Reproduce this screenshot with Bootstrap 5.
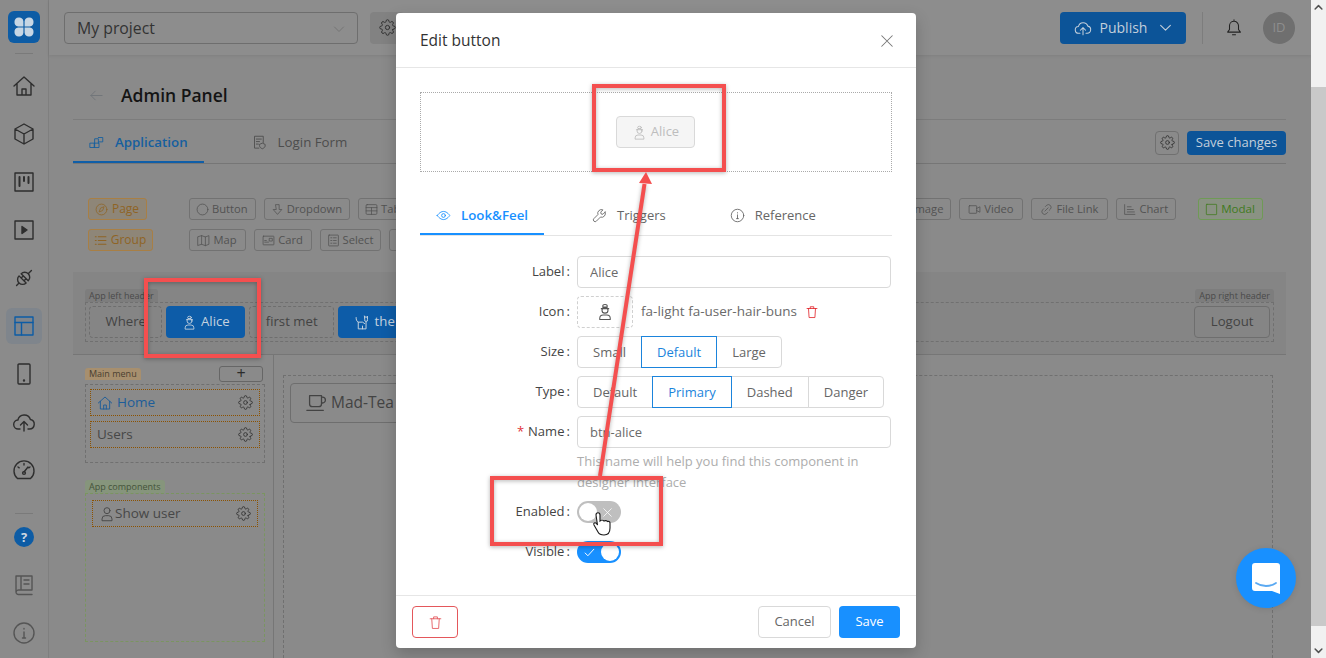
<!DOCTYPE html>
<html lang="en">
<head>
    <meta charset="UTF-8">
    <title>Admin Panel - Edit button</title>
    <link href="https://cdn.jsdelivr.net/npm/bootstrap@5.3.0/dist/css/bootstrap.min.css" rel="stylesheet">
    <style>
        body {
            font-family: "Open Sans", "Liberation Sans", sans-serif;
            font-size: 13px;
            background-color: #8a8a8a;
            color: #3a3a3a;
            width: 1326px;
            height: 658px;
            overflow: hidden;
            position: relative;
        }
        .ico { width: 1em; height: 1em; fill: none; stroke: currentColor; stroke-width: 1.4; stroke-linecap: round; stroke-linejoin: round; flex-shrink: 0; }

        /* left rail */
        .rail { width: 49px; border-right: 1px solid #7f7f7f; background-color: #8b8b8b; }
        .rail-logo { width: 32px; height: 32px; margin-top: 11px; background-color: #0d5ca5; border-radius: 6px; }
        .rail-sep { width: 18px; height: 1px; background-color: #7a7a7a; }
        .rail-sep-top { margin: 10px 0 8px; }
        .rail-sep-bottom { margin: 19px 0 -1px; }
        .rail-item { height: 48px; width: 100%; font-size: 24px; color: #2e2e2e; }
        .rail-item.is-on > span { width: 36px; height: 36px; border-radius: 6px; background-color: #7f858c; color: #0d5ca5; }
        .rail-item.is-soft { color: #555; }
        .rail-help { width: 20px; height: 20px; border-radius: 50%; background-color: #0d5ca5; color: #cfd8e2; font-size: 13px; font-weight: 700; line-height: 20px; text-align: center; }

        /* top bar */
        .topbar { height: 55px; padding: 0 16px 0 15px; background-color: #8d8d8d; box-shadow: 0 1px 3px rgba(0, 0, 0, .08); }
        .project-select { width: 294px; height: 32px; border: 1px solid #6e6e6e; border-radius: 4px; padding: 2px 12px 0; font-size: 15.8px; color: #333; }
        .top-gear { width: 34px; height: 32px; margin-left: 12px; background-color: #828282; border-radius: 4px; font-size: 17px; color: #333; }
        .btn-dim-primary { background-color: #0c5498; color: #c3cfdb; border: 0; border-radius: 4px; }
        .btn-dim-primary:hover { background-color: #0c5498; color: #c3cfdb; }
        .publish-btn { width: 126px; height: 32px; font-size: 14px; padding: 0; }
        .top-sep { width: 1px; height: 32px; background-color: #7d7d7d; margin: 0 16px; }
        .top-bell { font-size: 18px; color: #222; width: 30px; }
        .top-avatar { width: 32px; height: 32px; border-radius: 50%; background-color: #6f6f6f; color: #8e8e8e; font-size: 13px; margin-left: 14px; }

        /* page */
        .page-body { padding: 0 25px 0 24px; overflow: hidden; }
        .page-head { height: 65px; padding-top: 16px; border-bottom: 1px solid #7c7c7c; }
        .page-back { color: #6f7378; font-size: 15px; width: 48px; padding-left: 16px; }
        .page-title { font-size: 17.5px; font-weight: 600; color: #141414; margin: 0; }
        .tabs-line { height: 44px; border-bottom: 1px solid #767676; }
        .tab-row { gap: 32px; }
        .tab-item { height: 100%; padding: 4px 16px 0; gap: 11px; color: #4d4d4d; font-size: 13.3px; text-decoration: none; margin-bottom: -1px; border-bottom: 2px solid transparent; }
        .tab-item.is-on { color: #155f9f; font-weight: 600; border-bottom-color: #0f5ea8; }
        .tab-item .ico { font-size: 15px; }
        .tabs-tools { margin-top: 2px; }
        .gear-small { width: 24px; height: 24px; border: 1px solid #707070; border-radius: 4px; font-size: 15px; color: #333; margin-right: 8px; }
        .save-changes { width: 99px; height: 24px; font-size: 13px; padding: 0; }

        .palette { padding: 34px 0 0 15px; height: 108px; }
        .palette-side { width: 101px; }
        .palette-row { gap: 8px; height: 22px; margin-bottom: 9px; }
        .chip { height: 22px; padding: 0 7px 0 6px; border: 1px solid #727272; border-radius: 3px; font-size: 11.2px; color: #525252; gap: 3px; white-space: nowrap; justify-content: center; }
        .chip .ico { font-size: 13px; }
        .chip-orange { color: #8f6425; border-color: #a87f45; background-color: #8e8678; font-size: 12px; gap: 4px; }
        .chip-green { color: #3f7a1d; border-color: #6f9a56; background-color: #8a9283; font-weight: 500; margin-left: 14px; font-size: 11.6px; }
        .w-page { width: 59px; }
        .w-group { width: 65px; }
        .w-map { width: 57px; }
        .w-card { width: 58px; }
        .w-select { width: 61px; }
        .w-video { width: 64px; }
        .w-link { width: 77px; }

        .app-head { height: 83px; padding: 18px 12px 0; background-color: #858585; border-bottom: 1px solid #767676; }
        .zone-tag { height: 13px; line-height: 13px; padding: 0 4px; font-size: 9px; color: #4a4a4a; background-color: #7d7d7d; border-radius: 3px 3px 0 0; }
        .zone-box { height: 40px; padding: 3px 3px 3px 3px; border: 1px dashed #707070; gap: 4px; }
        .dim-btn { height: 32px; border-radius: 4px; font-size: 13.2px; color: #434343; gap: 4px; white-space: nowrap; }
        .dim-dashed { border: 1px dashed #6e6e6e; padding: 0 15.5px; }
        .dim-solid { border: 1px solid #6e6e6e; padding: 0 15.5px; }
        .dim-fill { background-color: #0d5ca8; color: #c5d2df; padding: 0 15.5px; }

        .menu-side { width: 201px; padding: 11px 8px 0 12px; border-right: 1px solid #767676; }
        .zone-tag-menu { background-color: #a78f6e; color: #4a4030; height: 12px; line-height: 12px; }
        .zone-tag-app { display: block; width: fit-content; background-color: #86957c; color: #44533a; height: 13px; line-height: 13px; margin-top: 17px; }
        .plus-btn { width: 44px; height: 16px; border: 1px solid #666; border-radius: 3px; font-size: 16px; line-height: 12px; color: #2b2b2b; text-align: center; margin-bottom: 2px; }
        .menu-box { height: 79px; width: 180px; border: 1px dashed #707070; padding: 4px; gap: 5px; }
        .apps-box { height: 149px; width: 180px; border: 1px dashed #7a9560; padding: 6px; }
        .menu-entry { height: 27px; border: 1px dashed #8c5200; border-style: dotted; padding: 0 6px; font-size: 13.5px; color: #474747; gap: 4px; }
        .menu-entry.is-on { color: #1c5d99; }
        .menu-entry.entry-tight { gap: 0; }
        .menu-entry .ico { font-size: 16px; }
        .menu-entry .ico-gear { color: #333; margin-left: auto; font-size: 15px; }
        .canvas-side { padding: 20px 13px 0 9px; }
        .canvas-box { height: 283px; border: 1px dashed #707070; border-bottom: 0; padding: 7px 6px; }
        .mad-btn { height: 40px; padding: 0 16px 0 14px; font-size: 15.5px; border: 1px solid #6e6e6e; border-radius: 4px; color: #434343; gap: 4px; width: max-content; }
        .mad-btn .ico { font-size: 22px; }

        /* fake scrollbar */
        .scroll-rail { width: 15px; background-color: #f1f1f1; color: #505050; }
        .scroll-thumb { background-color: #c9c9c9; margin-top: 72px; margin-bottom: 17px; }
        .scroll-arrow { height: 15px; font-size: 9px; }
        .scroll-arrow .ico { stroke-width: 4; }

        /* modal */
        .edit-modal { position: absolute; left: 396px; top: 13px; width: 520px; height: 635px; background-color: #fff; border: 0; border-radius: 4px; box-shadow: 0 6px 16px rgba(0, 0, 0, .2); z-index: 5; color: #555; }
        .edit-modal .modal-header { height: 55px; flex-shrink: 0; padding: 1px 24px 0; border-bottom: 1px solid #e6e6e6; }
        .edit-modal .modal-title { font-size: 15.5px; font-weight: 500; color: #333; margin: 0; }
        .modal-x { font-size: 18px; color: #777; margin-right: -4px; }
        .edit-modal .modal-body { padding: 24px; flex: 1; min-height: 0; overflow: hidden; }
        .preview-box { height: 80px; border: 1px dotted #aaa; }
        .btn-preview { width: 79px; height: 32px; margin-right: 1px; background-color: #f5f5f5; border: 1px solid #d9d9d9; border-radius: 4px; color: #bdbdbd; font-size: 13px; gap: 4px; }
        .btn-preview .ico { font-size: 15px; }
        .modal-tabs { height: 40px; margin-top: 24px; border-bottom: 1px solid #e4e4e4; }
        .modal-tabs .tab-item { padding-top: 2px; color: #666; font-size: 13px; gap: 10px; }
        .modal-tabs .tab-item.is-on { color: #1890ff; font-size: 13.3px; font-weight: 600; border-bottom-color: #1890ff; }
        .form-rows { padding-top: 20px; }
        .form-line { display: flex; align-items: center; height: 32px; margin-bottom: 8px; }
        .form-line.line-icon { height: 33px; margin-top: -1px; }
        .form-cap { width: 150px; text-align: right; color: #444; margin-right: 7px; font-size: 13px; white-space: nowrap; }
        .form-cap .req { color: #e2333a; margin-right: 4px; }
        .field { width: 314px; height: 32px; font-size: 13px; padding: 0 12px; color: #6a6a6a; border: 1px solid #d9d9d9; border-radius: 4px; box-shadow: none; }
        .icon-pick { width: 56px; height: 32px; border: 1px dashed #d0d0d0; border-radius: 4px; font-size: 18px; color: #555; }
        .icon-name { margin-left: 8px; color: #6a6a6a; font-size: 13.5px; }
        .icon-del { margin-left: 8px; color: #e2232a; font-size: 14px; }
        .seg .btn { height: 32px; padding: 0 15px; font-size: 13px; color: #666; border-color: #d9d9d9; background: #fff; border-radius: 4px; line-height: 30px; }
        .seg .btn.is-on { color: #1b84dc; border-color: #1b84dc; z-index: 1; }
        .form-note { margin: -5px 0 9px 157px; width: 310px; line-height: 21px; color: #adadad; font-size: 13px; }
        .form-line.line-toggle { height: 20px; margin-bottom: 20px; }
        .toggle-pill { width: 44px; height: 22px; border-radius: 11px; background-color: #bfbfbf; position: relative; color: #fff; font-size: 13px; }
        .toggle-pill::after { content: ""; position: absolute; top: 2px; left: 2px; width: 18px; height: 18px; border-radius: 50%; background-color: #fff; }
        .toggle-pill .ico { position: absolute; top: 5px; right: 7px; }
        .toggle-pill.is-on { background-color: #1890ff; }
        .toggle-pill.is-on::after { left: 24px; }
        .toggle-pill.is-on .ico { right: auto; left: 6px; stroke-width: 1.800; }
        .edit-modal .modal-footer { height: 53px; flex-shrink: 0; padding: 0 16px; border-top: 1px solid #e6e6e6; }
        .edit-modal .modal-footer > * { margin: 0; }
        .foot-del { width: 46px; height: 32px; padding: 0; border: 1px solid #e4575b; border-radius: 4px; color: #e4575b; background: #fff; font-size: 15px; }
        .foot-cancel { width: 73px; height: 32px; padding: 0; border: 1px solid #d9d9d9; border-radius: 4px; color: #666; background: #fff; font-size: 13px; margin-right: 8px !important; }
        .foot-save { width: 61px; height: 32px; padding: 0; border: 0; border-radius: 4px; color: #fff; background: #1890ff; font-size: 13px; font-weight: 500; }

        .chat-bubble { position: absolute; left: 1236px; top: 548px; width: 60px; height: 60px; border-radius: 50%; background-color: #1890ff; box-shadow: 0 1px 6px rgba(0, 0, 0, .1); z-index: 6; }
        .markup { position: absolute; left: 0; top: 0; z-index: 8; pointer-events: none; }
    </style>
</head>
<body>
    <!-- icon set -->
    <svg class="d-none" xmlns="http://www.w3.org/2000/svg">
        <symbol id="i-gear" viewBox="0 0 24 24"><circle cx="12" cy="12" r="3"/><path d="M19.4 15a1.65 1.65 0 0 0 .33 1.82l.06.06a2 2 0 0 1 0 2.83 2 2 0 0 1-2.83 0l-.06-.06a1.65 1.65 0 0 0-1.82-.33 1.65 1.65 0 0 0-1 1.51V21a2 2 0 0 1-2 2 2 2 0 0 1-2-2v-.09A1.65 1.65 0 0 0 9 19.4a1.65 1.65 0 0 0-1.82.33l-.06.06a2 2 0 0 1-2.83 0 2 2 0 0 1 0-2.83l.06-.06a1.65 1.65 0 0 0 .33-1.82 1.65 1.65 0 0 0-1.51-1H3a2 2 0 0 1-2-2 2 2 0 0 1 2-2h.09A1.65 1.65 0 0 0 4.6 9a1.65 1.65 0 0 0-.33-1.82l-.06-.06a2 2 0 0 1 0-2.83 2 2 0 0 1 2.83 0l.06.06a1.65 1.65 0 0 0 1.82.33H9a1.65 1.65 0 0 0 1-1.51V3a2 2 0 0 1 2-2 2 2 0 0 1 2 2v.09a1.65 1.65 0 0 0 1 1.51 1.65 1.65 0 0 0 1.82-.33l.06-.06a2 2 0 0 1 2.83 0 2 2 0 0 1 0 2.83l-.06.06a1.65 1.65 0 0 0-.33 1.82V9a1.65 1.65 0 0 0 1.51 1H21a2 2 0 0 1 2 2 2 2 0 0 1-2 2h-.09a1.65 1.65 0 0 0-1.51 1z"/></symbol>
        <symbol id="i-home" viewBox="0 0 24 24"><path d="M2 12 12 3l10 9M5 9.5V21h14V9.5M10 21v-6h4v6"/></symbol>
        <symbol id="i-cube" viewBox="0 0 24 24"><path d="M12 2 3 7v10l9 5 9-5V7zM3 7l9 5 9-5M12 12v10"/></symbol>
        <symbol id="i-kanban" viewBox="0 0 24 24"><rect x="3" y="3" width="18" height="18"/><path d="M7.5 7v9M12 7v4M16.5 7v6" stroke-width="2"/></symbol>
        <symbol id="i-play" viewBox="0 0 24 24"><rect x="3" y="3" width="18" height="18"/><path d="M10 8.5v7l5-3.5z" fill="currentColor"/></symbol>
        <symbol id="i-plug" viewBox="0 0 24 24"><g transform="rotate(45 12 12)"><path d="M7 11a5 5 0 0 1 10 0zM12 6V1.500M7 14h10a5 5 0 0 1-10 0zM12 19v3.500M10 11v3M14 11v3"/></g></symbol>
        <symbol id="i-layout" viewBox="0 0 24 24"><rect x="3" y="3" width="18" height="18"/><path d="M3 8.5h18M9.5 8.5V21"/></symbol>
        <symbol id="i-phone" viewBox="0 0 24 24"><rect x="6" y="2" width="12" height="20" rx="1"/><circle cx="12" cy="18.5" r=".5" fill="currentColor"/></symbol>
        <symbol id="i-cloud" viewBox="0 0 24 24"><path d="M8 19H6.5a4.5 4.5 0 0 1-.6-9A6.5 6.5 0 0 1 18.400 9.500 4.800 4.800 0 0 1 17.500 19H16M12 21v-9M8.500 15 12 11.500 15.500 15"/></symbol>
        <symbol id="i-gauge" viewBox="0 0 24 24"><path d="M5.500 20.500a10 10 0 1 1 13 0zM12 14l4-5M12 5.500v1.500M6 9l1.200.8M18 9l-1.200.8"/><circle cx="12" cy="15" r="1.400"/></symbol>
        <symbol id="i-book" viewBox="0 0 24 24"><path d="M4 19V3h16v14H6.500A2.500 2.500 0 0 0 4 19a2.500 2.500 0 0 0 2.500 2.500H20M9 3v14M12 7h5M12 11h5"/></symbol>
        <symbol id="i-info" viewBox="0 0 24 24"><circle cx="12" cy="12" r="10"/><path d="M12 11v6M10.500 17h3M12 7.500v.5" /></symbol>
        <symbol id="i-buns" viewBox="0 0 24 24"><path d="M5 22v-1.500a4.500 4.500 0 0 1 4.500-4.500h5a4.500 4.500 0 0 1 4.500 4.500V22zM7 7.500h10"/><circle cx="12" cy="9.500" r="4"/><ellipse cx="12" cy="4" rx="3" ry="2"/></symbol>
        <symbol id="i-user" viewBox="0 0 24 24"><circle cx="12" cy="7" r="4.500"/><path d="M4.500 21.500v-2a5 5 0 0 1 5-5h5a5 5 0 0 1 5 5v2z"/></symbol>
        <symbol id="i-mug" viewBox="0 0 24 24"><path d="M5 4h13v9a3 3 0 0 1-3 3H8a3 3 0 0 1-3-3zM18 5.500h1a3 3 0 0 1 0 6.500h-1M2 20h18"/></symbol>
        <symbol id="i-cat" viewBox="0 0 24 24"><path d="M3 5c0 3 .5 5 3 6.500V21h11V11M6 11.500h6l3 2M12 21v-4M15 3l1 1.500h2L19 3v5a2 2 0 0 1-2 2.500A2 2 0 0 1 15 8z"/></symbol>
        <symbol id="i-eye" viewBox="0 0 24 24"><path d="M2 12s4-6.500 10-6.500S22 12 22 12s-4 6.500-10 6.500S2 12 2 12z"/><circle cx="12" cy="12" r="3"/></symbol>
        <symbol id="i-wrench" viewBox="0 0 24 24"><path d="M21 6.500l-3.500 3.500-3-.5-.5-3L17.500 3a6 6 0 0 0-8 7.500L3 17a2.800 2.800 0 0 0 4 4l6.500-6.500A6 6 0 0 0 21 6.500z"/></symbol>
        <symbol id="i-trash" viewBox="0 0 24 24"><path d="M3.500 6h17M6 6l1 15.500h10L18 6M9 6V3h6v3"/></symbol>
        <symbol id="i-x" viewBox="0 0 24 24"><path d="M5 5l14 14M19 5 5 19"/></symbol>
        <symbol id="i-check" viewBox="0 0 24 24"><path d="M4 13l5 5L20 6"/></symbol>
        <symbol id="i-down" viewBox="0 0 24 24"><path d="M3 8l9 9 9-9"/></symbol>
        <symbol id="i-up" viewBox="0 0 24 24"><path d="M3 16l9-9 9 9"/></symbol>
        <symbol id="i-bell" viewBox="0 0 24 24"><path d="M12 3a6 6 0 0 0-6 6v5l-2.500 3.500h17L18 14V9a6 6 0 0 0-6-6zM12 1v2M10 21h4"/></symbol>
        <symbol id="i-left" viewBox="0 0 24 24"><path d="M21 12H3M10 5l-7 7 7 7"/></symbol>
        <symbol id="i-blocks" viewBox="0 0 24 24"><path d="M2 13h7v7H2zM9 13h7v7H9zM9 13V6h6v7M15 4h7v7h-6"/></symbol>
        <symbol id="i-form" viewBox="0 0 24 24"><path d="M11 21H4V2h14v10M7 6.500h8M7 10.500h5M7 14.500h3M12 15l4.500-2 4.500 2v2.500c0 2-2 3.500-4.500 4.500-2.500-1-4.500-2.500-4.500-4.500z"/></symbol>
        <symbol id="i-compass" viewBox="0 0 24 24"><circle cx="12" cy="12" r="10"/><path d="M16.500 7.500 14 14l-6.500 2.500L10 10z"/></symbol>
        <symbol id="i-list" viewBox="0 0 24 24"><path d="M8 5h14M8 12h14M8 19h14M2.500 5h1.500M2.500 12h1.500M2.500 19h1.500" stroke-width="2"/></symbol>
        <symbol id="i-circle" viewBox="0 0 24 24"><circle cx="12" cy="12" r="10"/></symbol>
        <symbol id="i-arrow-down" viewBox="0 0 24 24"><path d="M9 3h6v9h5l-8 9-8-9h5z"/></symbol>
        <symbol id="i-table" viewBox="0 0 24 24"><rect x="2" y="3" width="20" height="18" rx="2"/><path d="M2 8.500h20M2 14.500h20M12 8.500V21"/></symbol>
        <symbol id="i-map" viewBox="0 0 24 24"><path d="M2 5l6.500-2 7 2.500L22 3v16l-6.500 2.500-7-2.500L2 21zM8.500 3v16M15.500 5.500v16"/></symbol>
        <symbol id="i-card" viewBox="0 0 24 24"><rect x="2" y="4" width="20" height="16" rx="1"/><path d="M5 15h7M5 12h3M14 8h5v5h-5z"/></symbol>
        <symbol id="i-select" viewBox="0 0 24 24"><rect x="3" y="2" width="18" height="20" rx="1"/><path d="M7 7h2M12 7h5M7 12h2M12 12h5M7 17h2M12 17h5"/></symbol>
        <symbol id="i-image" viewBox="0 0 24 24"><rect x="2" y="4" width="20" height="16" rx="1"/><path d="M2 17l6-6 5 5 3-3 6 6"/></symbol>
        <symbol id="i-video" viewBox="0 0 24 24"><rect x="2" y="5" width="14" height="14" rx="1"/><path d="M16 10l6-3v10l-6-3"/></symbol>
        <symbol id="i-link" viewBox="0 0 24 24"><path d="M9 15l6-6M10 6.500l2.500-2.500a5 5 0 0 1 7 7L17 13.500M14 17.500 11.500 20a5 5 0 0 1-7-7L7 10.500"/></symbol>
        <symbol id="i-chart" viewBox="0 0 24 24"><path d="M3 3v18h19M8 7h7M8 12h11M8 16.500h13"/></symbol>
        <symbol id="i-square" viewBox="0 0 24 24"><rect x="2.500" y="2.500" width="19" height="19" rx="1"/></symbol>
    </svg>

    <div class="d-flex h-100">
        <!-- left rail -->
        <aside class="rail d-flex flex-column align-items-center">
            <div class="rail-logo d-flex align-items-center justify-content-center">
                <svg width="22" height="22" viewBox="0 0 22 22" fill="#c7d6e4"><path d="M10.400 10.400H5.200a4.500 4.500 0 1 1 5.200-5.200zM11.600 10.400h5.200a4.500 4.500 0 1 0-5.200-5.200zM10.400 11.600H5.200a4.500 4.500 0 1 0 5.200 5.200zM11.600 11.600h5.200a4.500 4.500 0 1 1-5.200 5.200z"/></svg>
            </div>
            <div class="rail-sep rail-sep-top"></div>
            <div class="rail-item d-flex align-items-center justify-content-center"><svg class="ico"><use href="#i-home"/></svg></div>
            <div class="rail-item d-flex align-items-center justify-content-center"><svg class="ico"><use href="#i-cube"/></svg></div>
            <div class="rail-item d-flex align-items-center justify-content-center"><svg class="ico"><use href="#i-kanban"/></svg></div>
            <div class="rail-item d-flex align-items-center justify-content-center"><svg class="ico"><use href="#i-play"/></svg></div>
            <div class="rail-item d-flex align-items-center justify-content-center"><svg class="ico"><use href="#i-plug"/></svg></div>
            <div class="rail-item is-on d-flex align-items-center justify-content-center"><span class="d-flex align-items-center justify-content-center"><svg class="ico"><use href="#i-layout"/></svg></span></div>
            <div class="rail-item d-flex align-items-center justify-content-center"><svg class="ico"><use href="#i-phone"/></svg></div>
            <div class="rail-item d-flex align-items-center justify-content-center"><svg class="ico"><use href="#i-cloud"/></svg></div>
            <div class="rail-item d-flex align-items-center justify-content-center"><svg class="ico"><use href="#i-gauge"/></svg></div>
            <div class="rail-sep rail-sep-bottom"></div>
            <div class="rail-item d-flex align-items-center justify-content-center"><span class="rail-help">?</span></div>
            <div class="rail-item is-soft d-flex align-items-center justify-content-center"><svg class="ico"><use href="#i-book"/></svg></div>
            <div class="rail-item is-soft d-flex align-items-center justify-content-center"><svg class="ico"><use href="#i-info"/></svg></div>
        </aside>

        <main class="flex-grow-1 d-flex flex-column" style="min-width:0">
            <!-- top bar -->
            <header class="topbar d-flex align-items-center flex-shrink-0">
                <div class="project-select d-flex align-items-center justify-content-between">
                    <span>My project</span>
                    <svg class="ico" style="font-size:12px;color:#6a6a6a"><use href="#i-down"/></svg>
                </div>
                <div class="top-gear d-flex align-items-center justify-content-center"><svg class="ico"><use href="#i-gear"/></svg></div>
                <button type="button" class="btn btn-dim-primary publish-btn d-flex align-items-center justify-content-center gap-2 ms-auto">
                    <svg class="ico" style="font-size:18px"><use href="#i-cloud"/></svg>
                    <span>Publish</span>
                    <svg class="ico ms-1" style="font-size:13px;stroke-width:2"><use href="#i-down"/></svg>
                </button>
                <div class="top-sep"></div>
                <div class="top-bell d-flex justify-content-center"><svg class="ico"><use href="#i-bell"/></svg></div>
                <div class="top-avatar d-flex align-items-center justify-content-center">ID</div>
            </header>

            <div class="page-body flex-grow-1">
                <div class="page-head d-flex align-items-center">
                    <div class="page-back d-flex"><svg class="ico"><use href="#i-left"/></svg></div>
                    <h1 class="page-title">Admin Panel</h1>
                </div>

                <div class="tabs-line d-flex justify-content-between">
                    <div class="d-flex tab-row h-100">
                        <a class="tab-item is-on d-flex align-items-center"><svg class="ico"><use href="#i-blocks"/></svg>Application</a>
                        <a class="tab-item d-flex align-items-center"><svg class="ico"><use href="#i-form"/></svg>Login Form</a>
                    </div>
                    <div class="tabs-tools d-flex align-items-center">
                        <div class="gear-small d-flex align-items-center justify-content-center"><svg class="ico"><use href="#i-gear"/></svg></div>
                        <button type="button" class="btn btn-dim-primary save-changes">Save changes</button>
                    </div>
                </div>

                <!-- component palette -->
                <div class="palette d-flex">
                    <div class="palette-side">
                        <div class="palette-row d-flex"><span class="chip chip-orange w-page d-flex align-items-center"><svg class="ico"><use href="#i-compass"/></svg>Page</span></div>
                        <div class="palette-row d-flex"><span class="chip chip-orange w-group d-flex align-items-center"><svg class="ico"><use href="#i-list"/></svg>Group</span></div>
                    </div>
                    <div class="flex-grow-1">
                        <div class="palette-row d-flex">
                            <span class="chip d-flex align-items-center"><svg class="ico"><use href="#i-circle"/></svg>Button</span>
                            <span class="chip d-flex align-items-center"><svg class="ico"><use href="#i-arrow-down"/></svg>Dropdown</span>
                            <span class="chip d-flex align-items-center"><svg class="ico"><use href="#i-table"/></svg>Table</span>
                            <span class="chip d-flex align-items-center ms-auto"><svg class="ico"><use href="#i-image"/></svg>Image</span>
                            <span class="chip w-video d-flex align-items-center"><svg class="ico"><use href="#i-video"/></svg>Video</span>
                            <span class="chip w-link d-flex align-items-center"><svg class="ico"><use href="#i-link"/></svg>File Link</span>
                            <span class="chip d-flex align-items-center"><svg class="ico"><use href="#i-chart"/></svg>Chart</span>
                            <span class="chip chip-green d-flex align-items-center"><svg class="ico"><use href="#i-square"/></svg>Modal</span>
                            <span style="width:15px"></span>
                        </div>
                        <div class="palette-row d-flex">
                            <span class="chip w-map d-flex align-items-center"><svg class="ico"><use href="#i-map"/></svg>Map</span>
                            <span class="chip w-card d-flex align-items-center"><svg class="ico"><use href="#i-card"/></svg>Card</span>
                            <span class="chip w-select d-flex align-items-center"><svg class="ico"><use href="#i-select"/></svg>Select</span>
                            <span class="chip d-flex align-items-center">Input</span>
                        </div>
                    </div>
                </div>

                <!-- app header zone -->
                <div class="app-head">
                    <div class="d-flex justify-content-between align-items-end" style="width:1189px;margin-top:-1px">
                        <span class="zone-tag">App left header</span>
                        <span class="zone-tag">App right header</span>
                    </div>
                    <div class="zone-box d-flex align-items-center" style="width:1189px">
                        <span class="dim-btn dim-dashed d-flex align-items-center">Where</span>
                        <span class="dim-btn dim-fill d-flex align-items-center"><svg class="ico" style="font-size:15px"><use href="#i-buns"/></svg>Alice</span>
                        <span class="dim-btn dim-dashed d-flex align-items-center">first met</span>
                        <span class="dim-btn dim-fill d-flex align-items-center"><svg class="ico" style="font-size:17px"><use href="#i-cat"/></svg>the Cat</span>
                        <span class="dim-btn dim-solid d-flex align-items-center ms-auto">Logout</span>
                    </div>
                </div>

                <div class="d-flex">
                    <!-- menu column -->
                    <div class="menu-side flex-shrink-0">
                        <div class="d-flex justify-content-between align-items-end" style="width:178px">
                            <span class="zone-tag zone-tag-menu mb-1">Main menu</span>
                            <span class="plus-btn">+</span>
                        </div>
                        <div class="menu-box d-flex flex-column">
                            <div class="menu-entry is-on d-flex align-items-center"><svg class="ico"><use href="#i-home"/></svg>Home<svg class="ico ico-gear"><use href="#i-gear"/></svg></div>
                            <div class="menu-entry d-flex align-items-center">Users<svg class="ico ico-gear"><use href="#i-gear"/></svg></div>
                        </div>
                        <span class="zone-tag zone-tag-app">App components</span>
                        <div class="apps-box">
                            <div class="menu-entry entry-tight d-flex align-items-center"><svg class="ico"><use href="#i-user"/></svg>Show user<svg class="ico ico-gear"><use href="#i-gear"/></svg></div>
                        </div>
                    </div>
                    <!-- canvas -->
                    <div class="canvas-side flex-grow-1">
                        <div class="canvas-box">
                            <div class="mad-btn d-flex align-items-center"><svg class="ico"><use href="#i-mug"/></svg>Mad-Tea Party</div>
                        </div>
                    </div>
                </div>
            </div>
        </main>

        <!-- page scrollbar -->
        <div class="scroll-rail d-flex flex-column flex-shrink-0">
            <div class="scroll-arrow d-flex align-items-center justify-content-center"><svg class="ico"><use href="#i-up"/></svg></div>
            <div class="scroll-thumb flex-grow-1"></div>
            <div class="scroll-arrow d-flex align-items-center justify-content-center"><svg class="ico"><use href="#i-down"/></svg></div>
        </div>
    </div>

    <!-- modal over the page -->
    <div class="modal-content edit-modal d-flex flex-column">
        <div class="modal-header">
            <h5 class="modal-title">Edit button</h5>
            <svg class="ico modal-x"><use href="#i-x"/></svg>
        </div>
        <div class="modal-body">
            <div class="preview-box d-flex align-items-center justify-content-center">
                <div class="btn-preview d-flex align-items-center justify-content-center"><svg class="ico"><use href="#i-buns"/></svg>Alice</div>
            </div>
            <div class="modal-tabs d-flex tab-row">
                <a class="tab-item is-on d-flex align-items-center"><svg class="ico"><use href="#i-eye"/></svg>Look&amp;Feel</a>
                <a class="tab-item d-flex align-items-center"><svg class="ico"><use href="#i-wrench"/></svg>Triggers</a>
                <a class="tab-item d-flex align-items-center"><svg class="ico"><use href="#i-info"/></svg>Reference</a>
            </div>
            <div class="form-rows">
                <div class="form-line">
                    <label class="form-cap">Label&#8201;:</label>
                    <input class="form-control field" value="Alice">
                </div>
                <div class="form-line line-icon">
                    <label class="form-cap">Icon&#8201;:</label>
                    <div class="icon-pick d-flex align-items-center justify-content-center"><svg class="ico"><use href="#i-buns"/></svg></div>
                    <span class="icon-name">fa-light fa-user-hair-buns</span>
                    <svg class="ico icon-del"><use href="#i-trash"/></svg>
                </div>
                <div class="form-line">
                    <label class="form-cap">Size&#8201;:</label>
                    <div class="btn-group seg">
                        <button type="button" class="btn">Small</button>
                        <button type="button" class="btn is-on">Default</button>
                        <button type="button" class="btn">Large</button>
                    </div>
                </div>
                <div class="form-line">
                    <label class="form-cap">Type&#8201;:</label>
                    <div class="btn-group seg">
                        <button type="button" class="btn">Default</button>
                        <button type="button" class="btn is-on">Primary</button>
                        <button type="button" class="btn">Dashed</button>
                        <button type="button" class="btn">Danger</button>
                    </div>
                </div>
                <div class="form-line">
                    <label class="form-cap"><span class="req">*</span>Name&#8201;:</label>
                    <input class="form-control field" value="btn-alice">
                </div>
                <div class="form-note">This name will help you find this component in designer interface</div>
                <div class="form-line line-toggle">
                    <label class="form-cap">Enabled&#8201;:</label>
                    <div class="toggle-pill"><svg class="ico"><use href="#i-x"/></svg></div>
                </div>
                <div class="form-line line-toggle">
                    <label class="form-cap">Visible&#8201;:</label>
                    <div class="toggle-pill is-on"><svg class="ico"><use href="#i-check"/></svg></div>
                </div>
            </div>
        </div>
        <div class="modal-footer justify-content-between">
            <button type="button" class="btn foot-del d-flex align-items-center justify-content-center"><svg class="ico"><use href="#i-trash"/></svg></button>
            <div class="d-flex">
                <button type="button" class="btn foot-cancel">Cancel</button>
                <button type="button" class="btn foot-save">Save</button>
            </div>
        </div>
    </div>

    <!-- chat launcher -->
    <div class="chat-bubble d-flex align-items-center justify-content-center">
        <svg width="28" height="31" viewBox="0 0 28 31"><path d="M3 0h22a3 3 0 0 1 3 3v28l-8-3H3a3 3 0 0 1-3-3V3a3 3 0 0 1 3-3z" fill="#fff"/><path d="M4 20c6 4 14 4 20 0" fill="none" stroke="#5aa9f2" stroke-width="1.800" stroke-linecap="round"/></svg>
    </div>

    <!-- red annotations and cursor -->
    <svg class="markup" width="1326" height="658" viewBox="0 0 1326 658">
        <g fill="none" stroke="#f44f4f" stroke-width="4" style="filter:drop-shadow(0 1px 2px rgba(0,0,0,.3))">
            <rect x="146" y="280" width="113" height="76"/>
            <rect x="594" y="86" width="130" height="84"/>
            <rect x="492" y="478" width="169" height="66"/>
            <path d="M600 476 644.500 184"/>
        </g>
        <path d="M646 172 652 184 639 183z" fill="#f44f4f"/>
        <path d="M597 516c0-3 4-3 4 0v6c1-1 3-1 4 0 1-.7 3-.5 3.500.5 1-.4 2.500 0 2.500 1.500v5c0 4-2 7-6 7-3 0-5-1-6-3l-4-7c-1-2 1-3 2.500-1.500l1 1.500z" fill="#fff" stroke="#1a1a1a" stroke-width="1.100" transform="translate(-1 -1)"/>
    </svg>
</body>
</html>
